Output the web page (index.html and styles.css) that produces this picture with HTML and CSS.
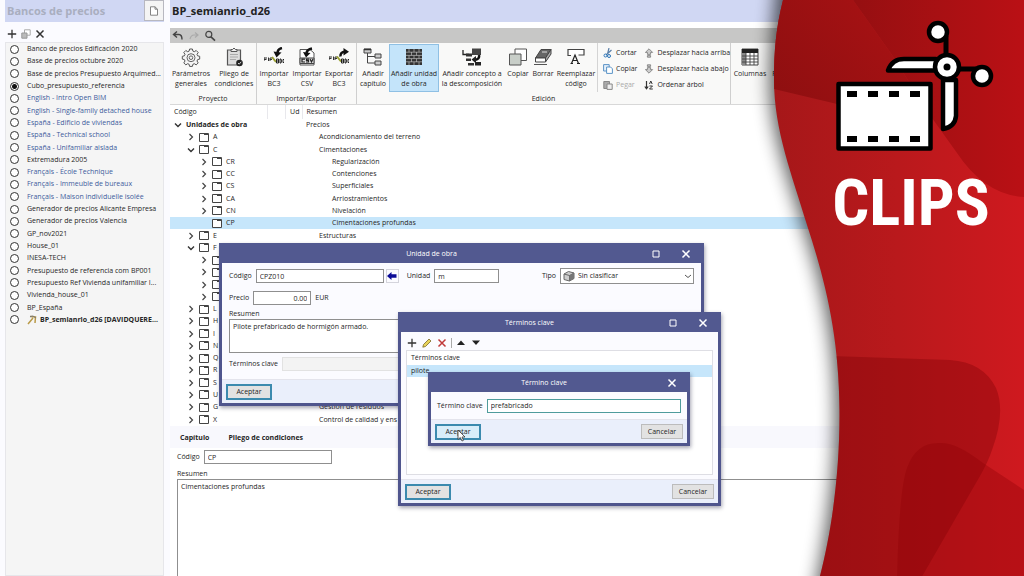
FILE: index.html
```html
<!DOCTYPE html>
<html lang="es">
<head>
<meta charset="utf-8">
<title>Bancos de precios</title>
<link rel="stylesheet" href="styles.css">
</head>
<body>
<svg class="defs" aria-hidden="true">
  <symbol id="right" viewBox="0 0 8 8"><path d="M2.5 1 5.500 4 2.500 7" fill="none" stroke="#444" stroke-width="1.200"/></symbol>
  <symbol id="down" viewBox="0 0 8 8"><path d="M1 2.500 4 5.500 7 2.500" fill="none" stroke="#333" stroke-width="1.400"/></symbol>
  <symbol id="folder" viewBox="0 0 10 9"><path d="M.5.500H9.500V8.500H.500Z" fill="#fff" stroke="#444"/><path d="M5 1.500H9" stroke="#444"/></symbol>
  <symbol id="plus" viewBox="0 0 10 10"><path d="M5 .8V9.200M.8 5H9.200" stroke="#333" stroke-width="1.300"/></symbol>
  <symbol id="cross" viewBox="0 0 10 10"><path d="M1.500 1.500 8.500 8.500M8.500 1.500 1.500 8.500" stroke="currentColor" stroke-width="1.500"/></symbol>
  <symbol id="square" viewBox="0 0 10 10"><path d="M2 2H8V8H2Z" fill="none" stroke="#fff"/></symbol>
  <symbol id="copy" viewBox="0 0 10 10"><path d="M.6.600H6.200V7H.600Z" fill="#e6f0fa" stroke="currentColor"/><path d="M3.600 3H7.600L9.400 4.800V9.400H3.600Z" fill="#fff" stroke="currentColor"/></symbol>
  <symbol id="arrow-up" viewBox="0 0 10 10"><path d="M5 .8 8.600 4.400H6.600V6.400H3.400V4.400H1.400ZM3.400 7.600H6.600V9.200H3.400Z" fill="#ccc" stroke="#777" stroke-width=".8"/></symbol>
</svg>

<div class="app">
  <aside class="sidebar">
    <header class="side-head">
      <h2 class="side-title">Bancos de precios</h2>
      <button class="doc-button" aria-label="Nuevo documento"><svg class="ic10" viewBox="0 0 10 10"><path d="M1.500.800H6L8.500 3.200V9.200H1.500ZM6 .8V3.200H8.500" fill="#fff" stroke="#777" stroke-width=".9"/></svg></button>
    </header>
    <div class="side-tools">
      <button aria-label="Añadir"><svg class="ic10"><use href="#plus"/></svg></button>
      <button aria-label="Duplicar"><svg class="ic10" viewBox="0 0 10 10"><path d="M3.500.800H9.200V6.200H3.500Z" fill="#fff" stroke="#aaa"/><path d="M.8 4H6V9.200H.800Z" fill="#bbb" stroke="#999"/></svg></button>
      <button aria-label="Eliminar" class="dark"><svg class="ic10"><use href="#cross"/></svg></button>
    </div>
    <div class="bank-list">
      <label><input type="radio" name="bank"><span>Banco de precios Edificación 2020</span></label>
      <label><input type="radio" name="bank"><span>Base de precios octubre 2020</span></label>
      <label><input type="radio" name="bank"><span>Base de precios Presupuesto Arquímed...</span></label>
      <label><input type="radio" name="bank" checked><span>Cubo_presupuesto_referencia</span></label>
      <label class="blue"><input type="radio" name="bank"><span>English - Intro Open BIM</span></label>
      <label class="blue"><input type="radio" name="bank"><span>English - Single-family detached house</span></label>
      <label class="blue"><input type="radio" name="bank"><span>España - Edificio de viviendas</span></label>
      <label class="blue"><input type="radio" name="bank"><span>España - Technical school</span></label>
      <label class="blue"><input type="radio" name="bank"><span>España - Unifamiliar aislada</span></label>
      <label><input type="radio" name="bank"><span>Extremadura 2005</span></label>
      <label class="blue"><input type="radio" name="bank"><span>Français - École Technique</span></label>
      <label class="blue"><input type="radio" name="bank"><span>Français - Immeuble de bureaux</span></label>
      <label class="blue"><input type="radio" name="bank"><span>Français - Maison individuelle isolée</span></label>
      <label><input type="radio" name="bank"><span>Generador de precios Alicante Empresa</span></label>
      <label><input type="radio" name="bank"><span>Generador de precios Valencia</span></label>
      <label><input type="radio" name="bank"><span>GP_nov2021</span></label>
      <label><input type="radio" name="bank"><span>House_01</span></label>
      <label><input type="radio" name="bank"><span>INESA-TECH</span></label>
      <label><input type="radio" name="bank"><span>Presupuesto de referencia com BP001</span></label>
      <label><input type="radio" name="bank"><span>Presupuesto Ref Vivienda unifamiliar I...</span></label>
      <label><input type="radio" name="bank"><span>Vivienda_house_01</span></label>
      <label><input type="radio" name="bank"><span>BP_España</span></label>
      <label class="strong"><input type="radio" name="bank"><svg class="ic10" viewBox="0 0 10 10"><path d="M1 9 6 3M3 1.500 8.500 2 8 8" fill="none" stroke="#b99a48" stroke-width="1.500"/><path d="M3 1.500 6 1 9 3" fill="none" stroke="#777"/></svg><span>BP_semianrio_d26 [DAVIDQUERE...</span></label>
    </div>
  </aside>

  <main class="main">
    <header class="main-head"><h1 class="main-title">BP_semianrio_d26</h1></header>
    <div class="quickbar">
      <button aria-label="Deshacer"><svg class="ic12" viewBox="0 0 12 12"><path d="M5 1.500 1.500 4.500 5 7.500M1.800 4.500H7Q10 4.800 10 9.500" fill="none" stroke="#444" stroke-width="1.400"/></svg></button>
      <button aria-label="Rehacer"><svg class="ic12" viewBox="0 0 12 12"><path d="M7 2.500 10 5 7 7.500M10 5H6Q3 5.200 2 9" fill="none" stroke="#aaa" stroke-width="1.200"/></svg></button>
      <button aria-label="Buscar"><svg class="ic12" viewBox="0 0 12 12"><circle cx="4.800" cy="4.400" r="3" fill="none" stroke="#444" stroke-width="1.200"/><path d="M7 6.800 11 10.600" stroke="#444" stroke-width="1.600"/></svg></button>
    </div>

    <div class="ribbon">
      <section class="group g-project">
        <div class="tools">
          <button class="tool w42"><svg class="big" viewBox="0 0 20 20"><path d="M8.600 2h2.800l.5 2.100 1.400.6 1.900-1.200 2 2-1.200 1.900.6 1.400 2.100.5v2.800l-2.100.5-.6 1.400 1.200 1.900-2 2-1.900-1.200-1.400.6-.5 2.100H8.600l-.5-2.100-1.400-.6-1.900 1.200-2-2 1.200-1.900-.6-1.400L1.300 12.100V9.300l2.100-.5.6-1.400L2.800 5.500l2-2 1.900 1.200 1.400-.6z" fill="#f4f4f4" stroke="#555"/><circle cx="10" cy="10.700" r="4" fill="none" stroke="#666"/><circle cx="10" cy="10.700" r="1.800" fill="none" stroke="#666"/></svg><span>Parámetros<br>generales</span></button>
          <button class="tool w44"><svg class="big" viewBox="0 0 20 20"><path d="M3.500 3H16.500V18H3.500Z" fill="#ddd" stroke="#555" stroke-width="1.200"/><path d="M7 4.500V2.500H8.500Q10-.5 11.500 2.500H13V4.500Z" fill="#eee" stroke="#555"/><path d="M6 7.500H14M6 10H14M6 12.500H12" stroke="#aaa"/><circle cx="15.500" cy="16" r="3.300" fill="#222"/><path d="m14 16 1.200 1.200 2-2.400" fill="none" stroke="#fff" stroke-width=".8"/></svg><span>Pliego de<br>condiciones</span></button>
        </div>
        <div class="group-name">Proyecto</div>
      </section>
      <section class="group g-import">
        <div class="tools">
          <button class="tool w34"><svg class="big" viewBox="0 0 20 20"><path d="M0 10.500V14M0 11H3M0 12.500H2.500M4.500 10.500V14M6 14V11H8.500M6 12.500H8" fill="none" stroke="#333"/><path d="M8 10 12 15" stroke="#9aa030" stroke-width="2"/><path d="M12.500 12H14.500V16H12.500ZM12.500 14H14.500M16 12H17L17.500 14 17 16H16ZM20.500 12.500H19V15.500H20.500" fill="none" stroke="#222"/><path d="M18 1Q13.500 2 13.500 6" fill="none" stroke="#111" stroke-width="2.500"/><path d="M9.500 4.500 17.500 5.500 12.500 10.500Z" fill="#111"/></svg><span>Importar<br>BC3</span></button>
          <button class="tool w32"><svg class="big" viewBox="0 0 20 20"><path d="M3 2.500H13L17 6V18H3Z" fill="#fff" stroke="#555"/><path d="M3 11H17V16.500H3Z" fill="#ddd" stroke="#444"/><path d="M8 12.200H5V15H8M12 12.200H9.500V13.500H11.500V15H9M13 12 14.500 15 16 12" fill="none" stroke="#222" stroke-width="1.200"/><path d="M15 1.500Q10 2.500 9.500 6" fill="none" stroke="#111" stroke-width="2.500"/><path d="M6 5 13.500 6 9 10.500Z" fill="#111"/></svg><span>Importar<br>CSV</span></button>
          <button class="tool w32"><svg class="big" viewBox="0 0 20 20"><path d="M0 9.500V13M0 10H3M0 11.500H2.500M4.500 9.500V13M6 13V10H8.500M6 11.500H8" fill="none" stroke="#333"/><path d="M8 9.500 12 14.500" stroke="#9aa030" stroke-width="2"/><path d="M12.500 12H14.500V16H12.500ZM12.500 14H14.500M16 12H17L17.500 14 17 16H16ZM20.500 12.500H19V15.500H20.500" fill="none" stroke="#222"/><path d="M11.500 9.500Q11 5 16 4.800" fill="none" stroke="#111" stroke-width="2.500"/><path d="M14.500 1 20 4.800 14.500 8.500Z" fill="#111"/></svg><span>Exportar<br>BC3</span></button>
        </div>
        <div class="group-name">Importar/Exportar</div>
      </section>
      <section class="group g-edit">
        <div class="edit-row">
          <div class="tools">
            <button class="tool w32"><svg class="big" viewBox="0 0 20 20"><path d="M1 2H8V6H1ZM12 7H18V11H12ZM12 14H18V18H12Z" fill="#ccc" stroke="#444"/><path d="M4.500 6V16H12M4.500 9.500H12" fill="none" stroke="#444"/><path d="M1 2.500H8" stroke="#333" stroke-width="1.500"/></svg><span>Añadir<br>capítulo</span></button>
            <button class="tool w50 active"><svg class="big" viewBox="0 0 20 20"><path d="M2 2H18V18H2Z" fill="#333"/><path d="M2 5.200H18M2 8.400H18M2 11.600H18M2 14.800H18M5 2V5M10 2V5M15 2V5M7.500 5V8.400M12.500 5V8.400M5 8.400V11.600M10 8.400V11.600M15 8.400V11.600M7.500 11.600V15M12.500 11.600V15M5 15V18M10 15V18M15 15V18" stroke="#bbb" stroke-width=".7"/></svg><span>Añadir unidad<br>de obra</span></button>
            <button class="tool w66"><svg class="big" viewBox="0 0 20 20"><path d="M10 1.500H19V8H10Z" fill="#444"/><path d="M1 3V7.500H7" fill="none" stroke="#222" stroke-width="1.300"/><path d="M4 6.500H10V9.500H4ZM4 11.500H9V14H4ZM6 16H12V18.500H6Z" fill="#333"/><path d="M17 8Q18 12 13 13" fill="none" stroke="#111" stroke-width="2.500"/><path d="M14 9V16.500L9.500 12.500ZM13 15H19V18.500H13Z" fill="#222"/></svg><span>Añadir concepto a<br>la descomposición</span></button>
            <button class="tool w26"><svg class="big" viewBox="0 0 20 20"><path d="M7 2H18.500V13.500H7Z" fill="#fff" stroke="#555"/><path d="M1.500 7H13V18H1.500Z" fill="#c8cec8" stroke="#555"/></svg><span>Copiar</span></button>
            <button class="tool w24"><svg class="big" viewBox="0 0 20 20"><path d="M8 2.500H18L12.500 11H2.500Z" fill="#666" stroke="#444"/><path d="M2.500 11H12.500V15H2.500Z" fill="#fff" stroke="#444"/><path d="M12.500 15 18 7V2.500L12.500 11Z" fill="#aaa" stroke="#444"/><path d="M1 17.500H14" stroke="#555"/><path d="M9 5H14" stroke="#ddd"/></svg><span>Borrar</span></button>
            <button class="tool w42"><svg class="big" viewBox="0 0 20 20"><path d="M5 8.500H2V2.500H18V8H12.500" fill="#fff" stroke="#444" stroke-width="1.200"/><path d="M5.500 16.500 9 8 12.500 16.500M7 13.500H11M4.500 16.500H7M11 16.500H14" fill="none" stroke="#222" stroke-width="1.200"/></svg><span>Reemplazar<br>código</span></button>
          </div>
          <div class="mini">
            <button><svg class="ic10" viewBox="0 0 10 10"><path d="M6 0 4.500 6M8.500 2 3 7" stroke="#5a7fa8" stroke-width="1.200"/><circle cx="2.500" cy="7.500" r="1.500" fill="none" stroke="#2b74b8"/><circle cx="6" cy="8" r="1.500" fill="none" stroke="#2b74b8"/></svg>Cortar</button>
            <button><svg class="ic10 copy-blue"><use href="#copy"/></svg>Copiar</button>
            <button class="off"><svg class="ic10" viewBox="0 0 10 10"><path d="M.8 1.500H6.500V8.500H.800Z" fill="#aaa" stroke="#888"/><path d="M4 4H9.200V9.400H4Z" fill="#eee" stroke="#888"/></svg>Pegar</button>
          </div>
          <div class="mini">
            <button><svg class="ic10"><use href="#arrow-up"/></svg>Desplazar hacia arriba</button>
            <button><svg class="ic10 flip"><use href="#arrow-up"/></svg>Desplazar hacia abajo</button>
            <button><svg class="ic10" viewBox="0 0 10 10"><path d="M2.500 1V8.500M.8 6.500 2.500 8.800 4.200 6.500" fill="none" stroke="#333" stroke-width="1.200"/><path d="M5.500 4 6.800 1 8.200 4M5.500 6H8.500L5.500 9H8.800" fill="none" stroke="#333"/></svg>Ordenar árbol</button>
          </div>
        </div>
        <div class="group-name">Edición</div>
      </section>
      <section class="group g-cols">
        <div class="tools">
          <button class="tool w38"><svg class="big" viewBox="0 0 20 20"><path d="M2 2H18V18H2Z" fill="#fff" stroke="#444"/><path d="M2 2H18V6H2Z" fill="#222"/><path d="M2 6H6V18H2Z" fill="#888"/><path d="M2 9H18M2 12H18M2 15H18M6 6V18M10 6V18M14 6V18" stroke="#444" stroke-width=".9"/></svg><span>Columnas</span></button>
          <button class="tool w10"><svg class="big" viewBox="0 0 20 20"></svg><span>F</span></button>
        </div>
      </section>
    </div>

    <table class="tree">
      <colgroup><col class="c1"><col class="c2"><col class="c3"><col></colgroup>
      <thead><tr><th>Código</th><th></th><th class="ud">Ud</th><th>Resumen</th></tr></thead>
      <tbody>
        <tr class="l0"><td><div><svg class="ic8"><use href="#down"/></svg><b>Unidades de obra</b></div></td><td></td><td></td><td>Precios</td></tr>
        <tr class="l1"><td><div><svg class="ic8"><use href="#right"/></svg><svg class="fold"><use href="#folder"/></svg>A</div></td><td></td><td></td><td>Acondicionamiento del terreno</td></tr>
        <tr class="l1"><td><div><svg class="ic8"><use href="#down"/></svg><svg class="fold"><use href="#folder"/></svg>C</div></td><td></td><td></td><td>Cimentaciones</td></tr>
        <tr class="l2"><td><div><svg class="ic8"><use href="#right"/></svg><svg class="fold"><use href="#folder"/></svg>CR</div></td><td></td><td></td><td>Regularización</td></tr>
        <tr class="l2"><td><div><svg class="ic8"><use href="#right"/></svg><svg class="fold"><use href="#folder"/></svg>CC</div></td><td></td><td></td><td>Contenciones</td></tr>
        <tr class="l2"><td><div><svg class="ic8"><use href="#right"/></svg><svg class="fold"><use href="#folder"/></svg>CS</div></td><td></td><td></td><td>Superficiales</td></tr>
        <tr class="l2"><td><div><svg class="ic8"><use href="#right"/></svg><svg class="fold"><use href="#folder"/></svg>CA</div></td><td></td><td></td><td>Arriostramientos</td></tr>
        <tr class="l2"><td><div><svg class="ic8"><use href="#right"/></svg><svg class="fold"><use href="#folder"/></svg>CN</div></td><td></td><td></td><td>Nivelación</td></tr>
        <tr class="l2 selected"><td><div><svg class="ic8"></svg><svg class="fold"><use href="#folder"/></svg>CP</div></td><td></td><td></td><td>Cimentaciones profundas</td></tr>
        <tr class="l1"><td><div><svg class="ic8"><use href="#right"/></svg><svg class="fold"><use href="#folder"/></svg>E</div></td><td></td><td></td><td>Estructuras</td></tr>
        <tr class="l1"><td><div><svg class="ic8"><use href="#down"/></svg><svg class="fold"><use href="#folder"/></svg>F</div></td><td></td><td></td><td></td></tr>
        <tr class="l2"><td><div><svg class="ic8"><use href="#right"/></svg><svg class="fold"><use href="#folder"/></svg></div></td><td></td><td></td><td></td></tr>
        <tr class="l2"><td><div><svg class="ic8"><use href="#right"/></svg><svg class="fold"><use href="#folder"/></svg></div></td><td></td><td></td><td></td></tr>
        <tr class="l2"><td><div><svg class="ic8"><use href="#right"/></svg><svg class="fold"><use href="#folder"/></svg></div></td><td></td><td></td><td></td></tr>
        <tr class="l2"><td><div><svg class="ic8"><use href="#right"/></svg><svg class="fold"><use href="#folder"/></svg></div></td><td></td><td></td><td></td></tr>
        <tr class="l1"><td><div><svg class="ic8"><use href="#right"/></svg><svg class="fold"><use href="#folder"/></svg>L</div></td><td></td><td></td><td></td></tr>
        <tr class="l1"><td><div><svg class="ic8"><use href="#right"/></svg><svg class="fold"><use href="#folder"/></svg>H</div></td><td></td><td></td><td></td></tr>
        <tr class="l1"><td><div><svg class="ic8"><use href="#right"/></svg><svg class="fold"><use href="#folder"/></svg>I</div></td><td></td><td></td><td></td></tr>
        <tr class="l1"><td><div><svg class="ic8"><use href="#right"/></svg><svg class="fold"><use href="#folder"/></svg>N</div></td><td></td><td></td><td></td></tr>
        <tr class="l1"><td><div><svg class="ic8"><use href="#right"/></svg><svg class="fold"><use href="#folder"/></svg>Q</div></td><td></td><td></td><td></td></tr>
        <tr class="l1"><td><div><svg class="ic8"><use href="#right"/></svg><svg class="fold"><use href="#folder"/></svg>R</div></td><td></td><td></td><td></td></tr>
        <tr class="l1"><td><div><svg class="ic8"><use href="#right"/></svg><svg class="fold"><use href="#folder"/></svg>S</div></td><td></td><td></td><td></td></tr>
        <tr class="l1"><td><div><svg class="ic8"><use href="#right"/></svg><svg class="fold"><use href="#folder"/></svg>U</div></td><td></td><td></td><td></td></tr>
        <tr class="l1"><td><div><svg class="ic8"><use href="#right"/></svg><svg class="fold"><use href="#folder"/></svg>G</div></td><td></td><td></td><td>Gestión de residuos</td></tr>
        <tr class="l1"><td><div><svg class="ic8"><use href="#right"/></svg><svg class="fold"><use href="#folder"/></svg>X</div></td><td></td><td></td><td>Control de calidad y ens</td></tr>
      </tbody>
    </table>

    <div class="tabs"><button>Capítulo</button><button>Pliego de condiciones</button></div>
    <section class="detail">
      <div class="field"><label for="code">Código</label><input id="code" class="box code" value="CP"></div>
      <label for="summary" class="above">Resumen</label>
      <textarea id="summary" class="box summary">Cimentaciones profundas</textarea>
    </section>
  </main>
</div>

<section class="window win-unit" role="dialog" aria-label="Unidad de obra">
  <header class="titlebar"><h3>Unidad de obra</h3><button aria-label="Maximizar"><svg class="ic10"><use href="#square"/></svg></button><button aria-label="Cerrar"><svg class="ic10"><use href="#cross"/></svg></button></header>
  <div class="unit-body">
    <div class="unit-line">
      <label for="ucode">Código</label><input id="ucode" class="box u-code" value="CPZ010">
      <button class="back" aria-label="Anterior"><svg class="ic10" viewBox="0 0 10 10"><path d="M0 5 4.500 1V3.200H9.500V6.800H4.500V9Z" fill="#0a0a96"/></svg></button>
      <label for="uunit">Unidad</label><input id="uunit" class="box u-unit" value="m">
      <label for="utype" class="push">Tipo</label>
      <span class="select-wrap"><svg class="ic12 cube" viewBox="0 0 12 12"><path d="M1 4 5.500 1.500 11 3 11 8.500 6.500 11 1 9.500Z" fill="#ccc" stroke="#666"/><path d="M1 4 6.500 5.500 11 3M6.500 5.500V11" fill="none" stroke="#666"/><path d="M6.500 5.500 11 3V8.500L6.500 11Z" fill="#777"/></svg><select id="utype" class="box"><option>Sin clasificar</option></select><svg class="ic8 caret" viewBox="0 0 8 8"><path d="M1 3 4 5.500 7 3" fill="none" stroke="#555"/></svg></span>
    </div>
    <div class="unit-line"><label for="uprice">Precio</label><input id="uprice" class="box u-price" value="0.00"><span>EUR</span></div>
    <label for="usum" class="above">Resumen</label>
    <textarea id="usum" class="box u-sum">Pilote prefabricado de hormigón armado.</textarea>
    <div class="unit-line"><label for="ukeys">Términos clave</label><input id="ukeys" class="box u-keys" disabled></div>
  </div>
  <footer class="actions"><button class="btn primary">Aceptar</button></footer>
</section>

<section class="window win-terms" role="dialog" aria-label="Términos clave">
  <header class="titlebar"><h3>Términos clave</h3><button aria-label="Maximizar"><svg class="ic10"><use href="#square"/></svg></button><button aria-label="Cerrar"><svg class="ic10"><use href="#cross"/></svg></button></header>
  <div class="terms-body">
    <div class="term-tools">
      <button aria-label="Añadir"><svg class="ic10"><use href="#plus"/></svg></button>
      <button aria-label="Editar"><svg class="ic10" viewBox="0 0 10 10"><path d="M.8 9.200 1.500 6.500 7 1 9 3 3.500 8.500Z" fill="#e8d35a" stroke="#7a6a2a" stroke-width=".8"/></svg></button>
      <button aria-label="Eliminar" class="red"><svg class="ic10"><use href="#cross"/></svg></button>
      <span class="bar"></span>
      <button aria-label="Subir"><svg class="ic10" viewBox="0 0 10 10"><path d="M1 7 5 2.500 9 7Z" fill="#222"/></svg></button>
      <button aria-label="Bajar"><svg class="ic10" viewBox="0 0 10 10"><path d="M1 2.500 5 7 9 2.500Z" fill="#222"/></svg></button>
    </div>
    <div class="term-list"><div class="term-head">Términos clave</div><div class="term-item">pilote</div></div>
  </div>
  <footer class="actions"><button class="btn primary">Aceptar</button><button class="btn">Cancelar</button></footer>
</section>

<section class="window win-term" role="dialog" aria-label="Término clave">
  <header class="titlebar"><h3>Término clave</h3><button aria-label="Cerrar"><svg class="ic10"><use href="#cross"/></svg></button></header>
  <div class="term-body"><label for="term">Término clave</label><input id="term" class="box focus" value="prefabricado"></div>
  <footer class="actions"><button class="btn primary hover">Aceptar</button><button class="btn">Cancelar</button></footer>
  <svg class="cursor" viewBox="0 0 9 13"><path d="M1 1V10.500L3.300 8.500 5 12 6.500 11.300 5 8H8Z" fill="#fff" stroke="#333" stroke-width=".8"/></svg>
</section>

<aside class="banner">
  <svg class="banner-art" viewBox="0 0 304 576" aria-hidden="true">
    <defs>
      <linearGradient id="base" gradientUnits="userSpaceOnUse" x1="50" x2="304" y1="0" y2="0"><stop offset="0" stop-color="#a51719"/><stop offset=".5" stop-color="#b9191c"/><stop offset="1" stop-color="#cf191f"/></linearGradient>
      <linearGradient id="left" gradientUnits="userSpaceOnUse" x1="50" x2="180" y1="90" y2="0"><stop offset="0" stop-color="#8e0f10"/><stop offset="1" stop-color="#aa1214"/></linearGradient>
      <linearGradient id="middle" gradientUnits="userSpaceOnUse" x1="135" x2="304" y1="0" y2="0"><stop offset="0" stop-color="#960f11"/><stop offset=".5" stop-color="#a81013"/><stop offset="1" stop-color="#ba1015"/></linearGradient>
      <clipPath id="edge"><path d="M63 0C56 28 54 50 54 80C54 130 72 175 87 225C105 280 119 335 119.500 410C120 470 112 530 100 576H304V0Z"/></clipPath>
      <filter id="soft" x="-30%" width="160%" y="-10%" height="120%"><feGaussianBlur stdDeviation="9"/></filter>
    </defs>
    <path d="M58 -30C53 28 50 50 50 80C50 130 68 175 83 225C101 280 115 335 115.500 410C116 470 108 530 92 606H304V-30Z" opacity=".65" filter="url(#soft)"/>
    <g clip-path="url(#edge)">
      <path d="M0 0H304V576H0Z" fill="url(#base)"/>
      <path d="M50 0H133L172 55 212 118 117 104 50 88Z" fill="url(#left)"/>
      <path d="M133 0H304V197Q265 195 237 153L212 118 172 55Z" fill="url(#middle)"/>
      <path d="M50 354 230 360Q263 362 276 388Q286 412 272 450Q268 462 260 476L200 580H50Z" fill="#7c0006" opacity=".36"/>
      <path d="M177 580Q179 490 187 468Q196 442 220 443Q236 442 263 463L304 490V580Z" fill="#8c0006" opacity=".34"/>
    </g>
    <g fill="#fff" stroke="#000" stroke-width="4.500" stroke-linejoin="round">
      <path d="M118.500 84H210.500V148.500H118.500Z"/>
      <path d="M168 70.500Q172 59 184 59H216V70.500Z"/>
      <path d="M223 80H236V116Q235 127 223 129Z"/>
      <path d="M226 36V60M236 69H256" fill="none" stroke-width="5"/>
      <circle cx="218" cy="32" r="9"/><circle cx="262" cy="76" r="9"/><circle cx="227" cy="67" r="12"/>
    </g>
    <circle cx="227" cy="67" r="3.500"/>
    <path d="M127 91h10v6h-10zM148 91h10v6h-10zM169 91h10v6h-10zM190 91h10v6h-10zM127 136h10v6h-10zM148 136h10v6h-10zM169 136h10v6h-10zM190 136h10v6h-10z"/>
  </svg>
  <div class="clips">CLIPS</div>
</aside>
</body>
</html>
```
FILE: styles.css
```css
* { box-sizing: border-box; }
body {
  margin: 0;
  height: 100vh;
  position: relative;
  overflow: hidden;
  background: #fbfbff;
  color: #262626;
  font-family: "Open Sans", "Noto Sans", sans-serif;
  font-size: 7px;
  line-height: 10px;
}
button, input, select, textarea { font: inherit; color: inherit; margin: 0; }
button { padding: 0; border: 0; background: none; }
svg { display: block; flex: none; }
h1, h2, h3 { margin: 0; }
.defs { position: absolute; width: 0; height: 0; }
.ic8 { width: 8px; height: 8px; }
.ic10 { width: 10px; height: 10px; }
.ic12 { width: 12px; height: 12px; }
.fold { width: 10px; height: 9px; }

.app { display: grid; grid-template-columns: 164px 1fr; gap: 6px; height: 100%; }

/* Sidebar */
.sidebar { display: flex; flex-direction: column; padding-left: 5px; }
.side-head { display: flex; justify-content: space-between; height: 22px; background: #d0d7f3; }
.side-title { padding-left: 2px; font-size: 11px; line-height: 22px; color: #a9aebf; }
.doc-button { display: grid; place-items: center; width: 20px; height: 21px; background: #f4f4f4; border: 1px solid #b8b8c0; }
.side-tools { display: flex; align-items: center; gap: 4px; height: 20px; padding: 3px 0 0 2px; }
.dark { color: #333; }
.bank-list {
  flex: 1;
  display: grid;
  grid-template-rows: repeat(23, 1fr);
  background: #f5f5f5;
  border: 1px solid #e6e6ea;
  padding: 0 4px 249px;
}
.bank-list label { display: flex; align-items: center; gap: 8px; white-space: nowrap; min-height: 0; }
.bank-list input {
  appearance: none;
  flex: none;
  width: 9px;
  height: 9px;
  border: 1px solid #333;
  border-radius: 50%;
  background: #fff;
}
.bank-list input:checked { background: radial-gradient(circle, #111 0 2px, #fff 3px); }
.bank-list .blue { color: #3d5c9c; }
.strong { font-weight: bold; }
.strong svg { margin-right: -5px; }

/* Main column */
.main { display: flex; flex-direction: column; min-width: 0; background: #fff; }
.main-head { height: 22px; background: #d0d7f3; }
.main-title { padding-left: 2px; font-size: 11px; line-height: 22px; color: #222; }
.quickbar { display: flex; align-items: center; gap: 4px; height: 15px; margin-top: 6px; padding-left: 2px; background: #c7c7c6; }

.ribbon { display: flex; height: 62px; background: #f9f9f8; border-bottom: 1px solid #d8d8d8; }
.group { display: flex; flex: none; flex-direction: column; justify-content: space-between; border-right: 1px solid #cfcfcf; }
.g-project { width: 87px; }
.g-import { width: 100px; }
.g-edit { width: 374px; }
.g-cols { flex: 1; border: 0; }
.tools { display: flex; padding-top: 1px; }
.tool { display: flex; flex: none; flex-direction: column; align-items: center; height: 48px; padding-top: 2px; white-space: nowrap; border: 1px solid transparent; }
.tool span { padding-top: 2px; text-align: center; }
.active { background: #c4e4fa; border-color: #8fc0e4; }
.big { width: 20px; height: 20px; }
.w10 { width: 10px; }
.w24 { width: 24px; }
.w26 { width: 26px; }
.w32 { width: 32px; }
.w34 { width: 34px; }
.w38 { width: 38px; }
.w42 { width: 42px; }
.w44 { width: 44px; }
.w50 { width: 50px; }
.w66 { width: 66px; }
.group-name { text-align: center; line-height: 10px; }
.edit-row { display: flex; }
.mini { display: flex; flex-direction: column; gap: 6px; padding: 5px 0 0 5px; }
.mini + .mini { padding-left: 7px; }
.mini button { display: flex; align-items: center; gap: 3px; white-space: nowrap; }
.tools + .mini { border-left: 1px solid #d4d4d4; }
.copy-blue { color: #5b93c6; }
.off { color: #aaa; }
.flip { transform: rotate(180deg); }

.tree { width: 100%; table-layout: fixed; border-collapse: collapse; height: 321px; }
.c1 { width: 97px; }
.c2 { width: 18px; }
.c3 { width: 17px; }
.tree th { height: 14px; padding: 0 4px; text-align: left; font-weight: normal; border-right: 1px solid #e8e8ec; }
.tree .ud { padding: 0 2px; text-align: right; }
.tree td { padding: 0; line-height: 10px; white-space: nowrap; }
.tree td + td { padding-left: 4px; }
.tree td div { display: flex; align-items: center; gap: 4px; height: 10px; padding-left: 4px; }
.tree .l1 div { padding-left: 17px; }
.tree .l2 div { padding-left: 30px; }
.tree .l1 td:last-child { padding-left: 17px; }
.tree .l2 td:last-child { padding-left: 30px; }
.selected { background: #c6e6fb; }

.tabs { display: flex; gap: 19px; height: 22px; padding: 2px 0 0 10px; background: #f8f8fd; font-weight: bold; }
.detail { flex: 1; display: flex; flex-direction: column; padding: 2px 0 0 7px; }
.field { display: flex; align-items: center; gap: 4px; }
.box { border: 1px solid #8f8f8f; background: #fff; padding: 0 3px; height: 14px; line-height: 12px; border-radius: 0; outline: 0; min-width: 0; }
textarea.box { display: block; resize: none; padding: 2px 3px; line-height: 10px; overflow: hidden; }
.code { width: 128px; }
.above { line-height: 10px; }
.detail .above { padding-top: 5px; }
.detail .summary { flex: 1; border-bottom: 0; }

/* Windows */
.window { position: absolute; display: flex; flex-direction: column; background: #fbfbff; border: 3px solid #4f558d; border-top: 0; box-shadow: 1px 2px 4px rgba(0, 0, 40, .35); }
.titlebar { display: flex; align-items: center; height: 20px; margin: 0 -3px; padding: 2px 13px 0; gap: 20px; background: #525990; color: #fff; }
.titlebar h3 { flex: 1; font-size: 7px; font-weight: normal; text-align: center; }
.actions { display: flex; align-items: center; justify-content: space-between; padding: 0 4px; background: #eaeffb; border-top: 1px solid #e4e4ec; }
.btn { width: 42px; height: 15px; background: #e2e2e2; border: 1px solid #bcbcbc; }
.primary { width: 46px; height: 16px; border: 2px solid #3b8aae; }
.hover { background: #d8edf9; }

.win-unit { left: 219px; top: 243px; width: 485px; height: 163px; }
.unit-body { flex: 1; display: flex; flex-direction: column; padding: 5px 7px 0; }
.unit-line { display: flex; align-items: center; gap: 4px; }
.unit-line + .unit-line { padding-top: 7px; }
.u-code { width: 128px; }
.back { display: grid; place-items: center; width: 13px; height: 14px; margin: 0 4px 0 -2px; border: 1px solid #d4d4dc; }
.u-unit { width: 65px; }
.push { margin-left: auto; }
.select-wrap { position: relative; width: 134px; }
.select-wrap select { display: block; width: 100%; height: 16px; padding-left: 17px; appearance: none; }
.cube { position: absolute; left: 3px; top: 2px; }
.caret { position: absolute; right: 2px; top: 4px; }
.u-price { width: 58px; text-align: right; }
.unit-body .above { padding-top: 4px; }
.unit-body .u-sum { height: 34px; }
.unit-body .u-sum + .unit-line { padding-top: 4px; }
.unit-line .u-keys { flex: 1; background: #f3f3f3; border-color: #e2e2e2; }
.win-unit .actions { height: 24px; }

.win-terms { left: 398px; top: 312px; width: 323px; height: 194px; }
.terms-body { flex: 1; display: flex; flex-direction: column; padding: 4px 5px; }
.term-tools { display: flex; align-items: center; gap: 5px; height: 14px; padding-left: 1px; }
.bar { width: 1px; height: 10px; margin: 0 -1px; background: #aaa; }
.red { color: #c03a3a; }
.term-list { flex: 1; border: 1px solid #dedee4; background: #fff; }
.term-head, .term-item { padding-left: 4px; line-height: 12px; }
.term-head { line-height: 14px; }
.term-item { background: #c6e6fb; }
.win-terms .actions { height: 24px; }

.win-term { left: 428px; top: 372px; width: 262px; height: 74px; }
.win-term h3 { padding-right: 0; }
.term-body { flex: 1; display: flex; align-items: center; gap: 4px; padding: 0 6px; }
.focus { flex: 1; border-color: #4f9c9c; }
.win-term .actions { height: 24px; }
.cursor { position: absolute; left: 26px; top: 57px; width: 9px; height: 13px; }

/* Banner */
.banner { position: absolute; right: 0; top: 0; width: 304px; height: 100%; pointer-events: none; }
.banner-art { width: 100%; height: 100%; }
.clips {
  position: absolute;
  left: 78px;
  right: 0;
  top: 163px;
  color: #fff;
  font-family: "Roboto Condensed", Lato, sans-serif;
  font-size: 65px;
  font-weight: bold;
  line-height: 80px;
  text-align: center;
}
```
